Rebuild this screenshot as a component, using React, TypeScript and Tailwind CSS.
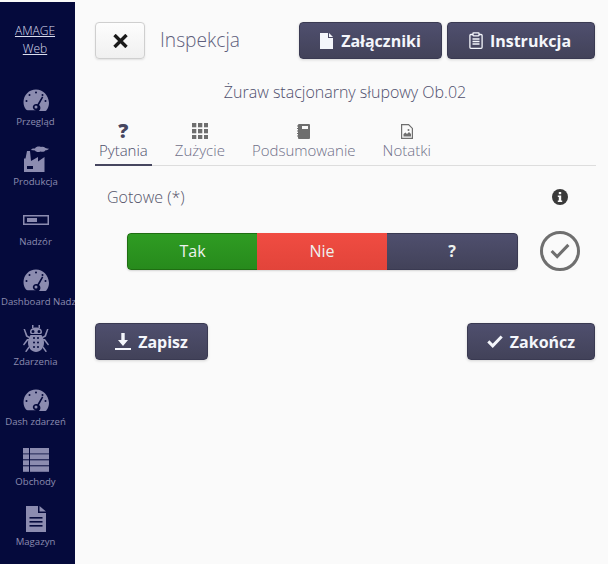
import React from "react";

const Gauge = () => (
  <svg width="26" height="22" viewBox="0 0 26 22" fill="#8c8cb0">
    <path fillRule="evenodd" d="M13 0.500C6 0.500 0.500 6 0.500 13c0 3 1 5.600 2.500 7.500.4.500 1 .8 1.600.8h8.500c-1.800 0-3.300-1.400-3.300-3.200 0-1.800 1.500-3.200 3.300-3.200.5 0 .9.100 1.300.3l4.600-7.700 1.300.8-4.300 7.800c.9.600 1.400 1.700 1.400 2.900 0 1.200-.6 2.300-1.600 3.100h6.100c.6 0 1.200-.3 1.600-.8 1.500-1.900 2.500-4.500 2.500-7.500C25.500 6 20 .5 13 .5z" />
    <circle cx="13" cy="18" r="1.500" />
    <g fill="#050a3c">
      <circle cx="13" cy="3.500" r="1" />
      <circle cx="6.500" cy="6" r="1" />
      <circle cx="19.500" cy="6" r="1" />
      <circle cx="3.500" cy="12" r="1" />
      <circle cx="22.500" cy="12" r="1" />
    </g>
  </svg>
);

const Factory = () => (
  <svg width="28" height="28" viewBox="0 0 28 28" fill="#8c8cb0">
    <path d="M2 27V13.500h1.500L5 6h3l1 10 7-4v4.500l6.500-4.500v15z" />
    <rect x="5" y="21" width="6" height="3" fill="#050a3c" />
    <path d="M9 5c1-2 3-1.500 4-1.500C14 1.500 17 1 19 2c1.500-.6 3-.3 4.500 1 1 .2 2 .6 3.500.8-1 1.200-2.500 1.400-3.500 1.500-1 1.500-3 1.900-5 1.200C16 7.500 14 7 13 5.500c-1.500-.3-2.500-.3-4-.5z" />
  </svg>
);

const Meter = () => (
  <svg width="26" height="10" viewBox="0 0 26 10">
    <rect x="0.750" y="0.750" width="24.500" height="8.500" fill="#050a3c" stroke="#8c8cb0" strokeWidth="1.500" />
    <rect x="4" y="3" width="10" height="4" fill="#8c8cb0" />
  </svg>
);

const Bug = () => (
  <svg width="26" height="28" viewBox="0 0 26 28" fill="#8c8cb0">
    <path d="M9 0h1.500v3h-1.500zM15.500 0H17v3h-1.500z" />
    <path fillRule="evenodd" d="M13 2.500c3.500 0 6 1.500 6 4.500 0 1-.5 1.700-1 2H8c-.5-.3-1-1-1-2 0-3 2.500-4.500 6-4.500zM10 5a1.500 1.500 0 1 0 0 3 1.500 1.500 0 0 0 0-3zM16 5a1.500 1.500 0 1 0 0 3 1.500 1.500 0 0 0 0-3z" />
    <path d="M7.500 10h11c1.500 2 2.500 5 2.500 8 0 5-4 9-8 9s-8-4-8-9c0-3 1-6 2.500-8z" />
    <g fill="#050a3c">
      <circle cx="11" cy="13" r="1" /><circle cx="15" cy="13" r="1" />
      <circle cx="11" cy="17.500" r="1" /><circle cx="15" cy="17.500" r="1" />
      <circle cx="11" cy="22" r="1" /><circle cx="15" cy="22" r="1" />
    </g>
    <path d="M0.500 4h1.500l2.500 6.500L7 12l-.5 1.500-3.500-2zM25.500 4H24l-2.500 6.500L19 12l.5 1.500 3.500-2zM4 14h2.500v1.500H5L1 20.500 0 19.500zM22 14h-2.500v1.500H21l4 5 1-1zM5.500 21.500l1 1.200L3.500 27l-1.500-.5zM20.500 21.500l-1 1.200 3 4.300 1.500-.5z" />
  </svg>
);

const Table = () => (
  <svg width="26" height="24" viewBox="0 0 26 24" fill="#8c8cb0">
    <rect x="0" y="0" width="6" height="5.500" /><rect x="7" y="0" width="19" height="5.500" />
    <rect x="0" y="6.300" width="6" height="5" /><rect x="7" y="6.300" width="19" height="5" />
    <rect x="0" y="12.300" width="6" height="5" /><rect x="7" y="12.300" width="19" height="5" />
    <rect x="0" y="18.300" width="6" height="5.500" /><rect x="7" y="18.300" width="19" height="5.500" />
  </svg>
);

const Doc = () => (
  <svg width="20" height="26" viewBox="0 0 20 26" fill="#8c8cb0">
    <path d="M0 0h12v7h8v19H0z" />
    <path d="M13.500 0L20 5.500h-6.500z" />
    <rect x="3.500" y="11" width="13" height="1.600" fill="#050a3c" />
    <rect x="3.500" y="15" width="13" height="1.600" fill="#050a3c" />
    <rect x="3.500" y="19" width="13" height="1.600" fill="#050a3c" />
  </svg>
);

const FileIcon = () => (
  <svg width="13" height="16" viewBox="0 0 13 16" fill="currentColor">
    <path d="M0 0h8v5h5v11H0z" /><path d="M9 0l4 4H9z" />
  </svg>
);

const Clipboard = () => (
  <svg width="14" height="17" viewBox="0 0 14 17" fill="none" stroke="currentColor" strokeWidth="1.300">
    <rect x="0.900" y="2.500" width="12.200" height="13.800" rx="1" />
    <rect x="4" y="0.800" width="6" height="3" rx="0.500" fill="#4a4a68" />
    <path d="M3.500 7h7M3.500 9.500h7M3.500 12h7" />
  </svg>
);

const XIcon = () => (
  <svg width="15" height="14" viewBox="0 0 15 14" fill="none" stroke="#1a1a1a" strokeWidth="3.400">
    <path d="M1.500 1l12 12M13.500 1l-12 12" />
  </svg>
);

const Download = () => (
  <svg width="16" height="17" viewBox="0 0 16 17" fill="currentColor">
    <path d="M6.300 0h3.400v7H13l-5 6-5-6h3.300z" /><rect x="0" y="15" width="16" height="2" />
  </svg>
);

const Check = ({ w = 16, stroke = "currentColor", sw = 3 }: { w?: number; stroke?: string; sw?: number }) => (
  <svg width={w} height={w * 0.8} viewBox="0 0 16 13" fill="none" stroke={stroke} strokeWidth={sw}>
    <path d="M1.200 6.500l4.500 4.500L14.800 1.500" />
  </svg>
);

const QuestionTab = () => (
  <span className="text-[20px] leading-[20px] font-extrabold text-[#46465f]">?</span>
);

const Grid = () => (
  <svg width="16" height="16" viewBox="0 0 16 16" fill="#6e6e6e">
    {[0, 6, 12].flatMap((x) => [0, 6, 12].map((y) => <rect key={`${x}-${y}`} x={x} y={y} width="4.300" height="4.300" />))}
  </svg>
);

const Notebook = () => (
  <svg width="13" height="15" viewBox="0 0 13 15">
    <rect x="1" y="0" width="12" height="15" rx="1" fill="#6e6e6e" />
    <rect x="5" y="2" width="6" height="3" fill="#fafafa" />
    <path d="M0 2h2M0 4.500h2M0 7h2M0 9.500h2M0 12h2" stroke="#6e6e6e" strokeWidth="1" />
  </svg>
);

const NoteFile = () => (
  <svg width="12" height="15" viewBox="0 0 12 15" fill="none">
    <path d="M.6.600h7l3.800 3.800v10H.6z" stroke="#6e6e6e" strokeWidth="1.200" />
    <path d="M2.500 12.500V10l2-1.500L6 10l2-2 2 2v2.500z" fill="#6e6e6e" />
    <circle cx="7.500" cy="6" r="1" fill="#6e6e6e" />
  </svg>
);

const InfoIcon = () => (
  <svg width="16" height="16" viewBox="0 0 16 16">
    <circle cx="8" cy="8" r="8" fill="#3a3a3a" />
    <rect x="6.800" y="3" width="2.400" height="2.200" fill="#fafafa" />
    <path d="M5.800 6.500h3.400v5h1v1.500H5.800v-1.500h1V8h-1z" fill="#fafafa" />
  </svg>
);

const navItems: { label: string; icon: React.ReactNode; pb: string }[] = [
  { label: "Przegląd", icon: <Gauge />, pb: "pb-[2px]" },
  { label: "Produkcja", icon: <Factory />, pb: "pb-0" },
  { label: "Nadzór", icon: <Meter />, pb: "pb-[8px]" },
  { label: "Dashboard Nadzór", icon: <Gauge />, pb: "pb-[2px]" },
  { label: "Zdarzenia", icon: <Bug />, pb: "pb-0" },
  { label: "Dash zdarzeń", icon: <Gauge />, pb: "pb-[2px]" },
  { label: "Obchody", icon: <Table />, pb: "pb-[1px]" },
  { label: "Magazyn", icon: <Doc />, pb: "pb-[1px]" },
];

const darkBtn =
  "flex items-center justify-center h-[37px] rounded-[4px] border border-[#3a3a52] bg-gradient-to-b from-[#4f4f6e] to-[#424259] text-[#f4f6fb] text-[16px] font-bold shadow-[0_1px_3px_rgba(0,0,0,0.15)]";

const tabs: { label: string; icon: React.ReactNode; active?: boolean }[] = [
  { label: "Pytania", icon: <QuestionTab />, active: true },
  { label: "Zużycie", icon: <Grid /> },
  { label: "Podsumowanie", icon: <Notebook /> },
  { label: "Notatki", icon: <NoteFile /> },
];

export default function App() {
  return (
    <div
      className="flex h-[564px] w-[608px] overflow-hidden bg-[#fafafa] pt-[2px]"
      style={{ fontFamily: '"Open Sans", sans-serif' }}
    >
      <aside className="flex w-[75px] shrink-0 flex-col overflow-hidden bg-[#050a3c] pr-[5px] text-center">
        <div className="mt-[20px] h-[50px] shrink-0 text-[12px] leading-[18px] font-light text-[#dcdeee]">
          <a className="underline">AMAGE</a>
          <br />
          <a className="underline">Web</a>
        </div>
        {navItems.map((n) => (
          <div key={n.label} className="h-[60px] w-full shrink-0 pl-[1px]">
            <div className={`flex h-[41px] items-end justify-center ${n.pb}`}>{n.icon}</div>
            <div className="mt-[2px] whitespace-nowrap text-[9.6px] leading-[14px] text-[#8c8cb0]">{n.label}</div>
          </div>
        ))}
      </aside>

      <main className="flex min-w-0 flex-1 flex-col pl-[20px] pr-[13px] pt-[20px]">
        <div className="flex items-center">
          <button className="flex h-[37px] w-[50px] items-center justify-center rounded-[4px] border border-[#cfcfcf] bg-gradient-to-b from-[#fdfdfd] to-[#f0f0f0] shadow-[0_1px_2px_rgba(0,0,0,0.1)]">
            <XIcon />
          </button>
          <h1 className="ml-[15px] text-[19.2px] font-light text-[#5e5e7c]">Inspekcja</h1>
          <div className="ml-auto flex gap-[5px]">
            <button className={`${darkBtn} w-[143px] gap-[8px]`}><FileIcon />Załączniki</button>
            <button className={`${darkBtn} w-[148px] gap-[7px] pr-[2px]`}><Clipboard />Instrukcja</button>
          </div>
        </div>

        <p className="mt-[22px] text-center text-[16px] leading-[22px] font-light text-[#4e4e6c]">Żuraw stacjonarny słupowy Ob.02</p>

        <div className="mt-[17px] mr-[-1px] flex gap-[19px] border-b border-[#dddddd]">
          {tabs.map((t) => (
            <div key={t.label} className="relative flex h-[45px] flex-col items-center px-[4px] pt-[1px]">
              <div className="flex h-[20px] items-center">{t.icon}</div>
              <span className={`whitespace-nowrap text-[15px] leading-[18px] font-light ${t.active ? "text-[#4e4e6c]" : "text-[#6f6f88]"}`}>{t.label}</span>
              {t.active && <div className="absolute bottom-[-1px] left-0 h-[2px] w-full bg-[#46465f]" />}
            </div>
          ))}
        </div>

        <div className="mt-[20px] flex items-center justify-between pl-[12px] pr-[27px]">
          <span className="text-[16px] leading-[22px] font-light text-[#55556a]">Gotowe (*)</span>
          <InfoIcon />
        </div>

        <div className="mt-[23px] flex items-center pl-[32px]">
          <div className="flex h-[37px] w-[391px] overflow-hidden rounded-[4px] text-[16px] text-[#eef2ee] shadow-[0_1px_2px_rgba(0,0,0,0.15)]">
            <div className="flex w-[130px] items-center justify-center rounded-l-[4px] border border-r-0 border-[#1f6e12] bg-gradient-to-b from-[#2f9c23] to-[#278a1c]">Tak</div>
            <div className="flex w-[130px] items-center justify-center bg-gradient-to-b from-[#f04c42] to-[#e2443a]">Nie</div>
            <div className="flex flex-1 items-center justify-center rounded-r-[4px] border border-l-0 border-[#3a3a52] bg-gradient-to-b from-[#4f4f6e] to-[#424259] font-bold">?</div>
          </div>
          <div className="ml-[22px] flex h-[40px] w-[40px] items-center justify-center rounded-full border-[3px] border-[#6f6f6f]">
            <Check w={20} stroke="#6f6f6f" sw={2.500} />
          </div>
        </div>

        <div className="mt-[52px] flex justify-between">
          <button className={`${darkBtn} w-[113px] gap-[7px]`}><Download />Zapisz</button>
          <button className={`${darkBtn} w-[128px] gap-[7px]`}><Check />Zakończ</button>
        </div>
      </main>
    </div>
  );
}
